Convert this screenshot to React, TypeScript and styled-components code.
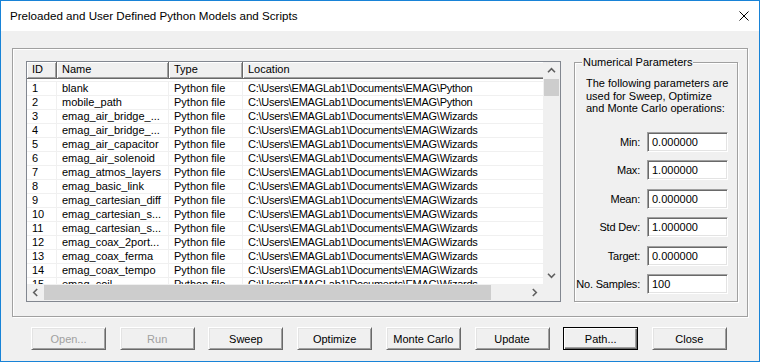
import * as React from 'react';
import styled, { createGlobalStyle } from 'styled-components';

const GlobalStyle = createGlobalStyle`
    html, body {
        margin: 0;
        padding: 0;
        background: #f0f0f0;
    }
    * {
        box-sizing: border-box;
    }
`;

const FONT = `"Liberation Sans", Arial, sans-serif`;

const models = [
    { name: 'blank', dir: 'Python' },
    { name: 'mobile_path', dir: 'Python' },
    { name: 'emag_air_bridge_...', dir: 'Wizards' },
    { name: 'emag_air_bridge_...', dir: 'Wizards' },
    { name: 'emag_air_capacitor', dir: 'Wizards' },
    { name: 'emag_air_solenoid', dir: 'Wizards' },
    { name: 'emag_atmos_layers', dir: 'Wizards' },
    { name: 'emag_basic_link', dir: 'Wizards' },
    { name: 'emag_cartesian_diff', dir: 'Wizards' },
    { name: 'emag_cartesian_s...', dir: 'Wizards' },
    { name: 'emag_cartesian_s...', dir: 'Wizards' },
    { name: 'emag_coax_2port...', dir: 'Wizards' },
    { name: 'emag_coax_ferma', dir: 'Wizards' },
    { name: 'emag_coax_tempo', dir: 'Wizards' },
    { name: 'emag_coil', dir: 'Wizards' },
];

const columns = [
    { title: 'ID', width: 30, spacing: 0 },
    { title: 'Name', width: 112, spacing: 0 },
    { title: 'Type', width: 74, spacing: 0 },
    { title: 'Location', width: 330, spacing: -0.25 },
];

const params = [
    { label: 'Min:', value: '0.000000' },
    { label: 'Max:', value: '1.000000' },
    { label: 'Mean:', value: '0.000000' },
    { label: 'Std Dev:', value: '1.000000' },
    { label: 'Target:', value: '0.000000' },
    { label: 'No. Samples:', value: '100' },
];

const buttons = [
    { text: 'Open...', disabled: true },
    { text: 'Run', disabled: true },
    { text: 'Sweep' },
    { text: 'Optimize' },
    { text: 'Monte Carlo' },
    { text: 'Update' },
    { text: 'Path...', isDefault: true },
    { text: 'Close' },
];

const Arrow = ({ dir }: { dir: 'up' | 'down' | 'left' | 'right' }) => {
    const rot = { up: 0, right: 90, down: 180, left: 270 }[dir];
    return (
        <svg width="9" height="9" viewBox="0 0 9 9">
            <path
                d="M1 6.2 L4.5 2.7 L8 6.2"
                fill="none"
                stroke="#606060"
                strokeWidth="1.6"
                transform={`rotate(${rot} 4.5 4.5)`}
            />
        </svg>
    );
};

class App extends React.Component {
    render() {
        return <>
            <GlobalStyle />
            <Window>
                <TitleBar>
                    <Title>Preloaded and User Defined Python Models and Scripts</Title>
                    <CloseGlyph>
                        <svg width="10" height="10" viewBox="0 0 10 10">
                            <path d="M0.5 0.5 L9.5 9.5 M9.5 0.5 L0.5 9.5" stroke="#000" strokeWidth="1" />
                        </svg>
                    </CloseGlyph>
                </TitleBar>
                <Body>
                    <Frame>
                        <ListView>
                            <Viewport>
                                <HeaderRow>
                                    {columns.map(c => (
                                        <HeaderCell key={c.title} $w={c.width}>{c.title}</HeaderCell>
                                    ))}
                                </HeaderRow>
                                <Rows>
                                    {models.map((m, i) => (
                                        <Row key={i}>
                                            <Cell $w={columns[0].width} $ls={columns[0].spacing}>{i + 1}</Cell>
                                            <Cell $w={columns[1].width} $ls={columns[1].spacing}>{m.name}</Cell>
                                            <Cell $w={columns[2].width} $ls={columns[2].spacing}>Python file</Cell>
                                            <Cell $w={columns[3].width} $ls={columns[3].spacing}>{`C:\\Users\\EMAGLab1\\Documents\\EMAG\\${m.dir}`}</Cell>
                                        </Row>
                                    ))}
                                </Rows>
                            </Viewport>
                            <ScrollBar $vertical>
                                <ScrollBtn><Arrow dir="up" /></ScrollBtn>
                                <Track $vertical>
                                    <Thumb $size={17} $vertical />
                                </Track>
                                <ScrollBtn><Arrow dir="down" /></ScrollBtn>
                            </ScrollBar>
                            <ScrollBar>
                                <ScrollBtn><Arrow dir="left" /></ScrollBtn>
                                <Track>
                                    <Thumb $size={447} />
                                </Track>
                                <ScrollBtn><Arrow dir="right" /></ScrollBtn>
                            </ScrollBar>
                            <Corner />
                        </ListView>
                        <GroupBox>
                            <Legend>Numerical Parameters</Legend>
                            <Description>
                                The following parameters are<br />
                                used for Sweep, Optimize<br />
                                and Monte Carlo operations:
                            </Description>
                            <ParamGrid>
                                {params.map(p => (
                                    <React.Fragment key={p.label}>
                                        <ParamLabel>{p.label}</ParamLabel>
                                        <Edit>{p.value}</Edit>
                                    </React.Fragment>
                                ))}
                            </ParamGrid>
                        </GroupBox>
                    </Frame>
                    <ButtonRow>
                        {buttons.map(b => (
                            <Button key={b.text} $disabled={b.disabled} $default={b.isDefault}>{b.text}</Button>
                        ))}
                    </ButtonRow>
                </Body>
            </Window>
        </>
    }
}

const Window = styled.div`
    width: 760px;
    height: 362px;
    border: 1px solid #1883d7;
    background: #f0f0f0;
    display: flex;
    flex-direction: column;
    font-family: ${FONT};
    font-size: 11px;
    color: #000;
    overflow: hidden;
`;

const TitleBar = styled.div`
    height: 30px;
    flex: none;
    background: #fff;
    display: flex;
    align-items: center;
    justify-content: space-between;
    padding: 0 10px 0 9px;
`;

const Title = styled.div`
    font-size: 11.6px;
    color: #000;
    padding-bottom: 1px;
`;

const CloseGlyph = styled.div`
    width: 10px;
    height: 10px;
    display: flex;
    margin-top: -1px;
`;

const Body = styled.div`
    flex: 1;
    display: flex;
    flex-direction: column;
    padding: 17px 0 0 11px;
`;

const Frame = styled.div`
    width: 736px;
    height: 269px;
    border: 1px solid #a0a0a0;
    box-shadow: inset 1px 1px 0 #fff, 1px 1px 0 #fff;
    display: flex;
    align-items: flex-start;
    gap: 13px;
    padding: 12px 9px 0 13px;
`;

const ListView = styled.div`
    width: 535px;
    height: 241px;
    flex: none;
    border: 1px solid #828790;
    background: #fff;
    display: grid;
    grid-template-columns: 516px 17px;
    grid-template-rows: 222px 17px;
`;

const Viewport = styled.div`
    overflow: hidden;
    background: #fff;
`;

const HeaderRow = styled.div`
    display: flex;
    height: 17px;
    width: max-content;
`;

const HeaderCell = styled.div<{ $w: number }>`
    width: ${p => p.$w}px;
    flex: none;
    height: 17px;
    line-height: 15px;
    padding-left: 5px;
    background: #f0f0f0;
    border-right: 1px solid #696969;
    border-bottom: 1px solid #696969;
    box-shadow: inset 1px 1px 0 #fff, inset -1px -1px 0 #a0a0a0;
    white-space: nowrap;
`;

const Rows = styled.div`
    padding-top: 2px;
`;

const Row = styled.div`
    display: flex;
    height: 14px;
    width: max-content;
    border-top: 1px solid #f0f0f0;
`;

const Cell = styled.div<{ $w: number; $ls: number }>`
    width: ${p => p.$w}px;
    flex: none;
    line-height: 13px;
    padding-left: 5px;
    letter-spacing: ${p => p.$ls}px;
    border-right: 1px solid #f0f0f0;
    white-space: nowrap;
    overflow: hidden;
`;

const ScrollBar = styled.div<{ $vertical?: boolean }>`
    display: flex;
    flex-direction: ${p => p.$vertical ? 'column' : 'row'};
    background: #f0f0f0;
`;

const ScrollBtn = styled.div`
    width: 17px;
    height: 17px;
    flex: none;
    display: flex;
    align-items: center;
    justify-content: center;
`;

const Track = styled.div<{ $vertical?: boolean }>`
    flex: 1;
    display: flex;
    flex-direction: ${p => p.$vertical ? 'column' : 'row'};
`;

const Thumb = styled.div<{ $size: number; $vertical?: boolean }>`
    flex: none;
    background: #cdcdcd;
    ${p => p.$vertical
        ? `height: ${p.$size}px; width: 15px; margin-left: 1px;`
        : `width: ${p.$size}px; height: 15px; margin-top: 1px;`}
`;

const Corner = styled.div`
    background: #f0f0f0;
`;

const GroupBox = styled.div`
    width: 164px;
    height: 240px;
    flex: none;
    margin-top: 1px;
    border: 1px solid #a0a0a0;
    box-shadow: inset 1px 1px 0 #fff, 1px 1px 0 #fff;
    display: flex;
    flex-direction: column;
    padding: 0 9px 0 11px;
`;

const Legend = styled.div`
    align-self: flex-start;
    margin: -7px 0 0 -4px;
    padding: 0 1px;
    line-height: 13px;
    background: #f0f0f0;
    white-space: nowrap;
`;

const Description = styled.div`
    margin-top: 8px;
    line-height: 12.5px;
    white-space: nowrap;
`;

const ParamGrid = styled.div`
    margin-top: 17px;
    display: grid;
    grid-template-columns: minmax(0, 1fr) 81px;
    grid-auto-rows: 20px;
    column-gap: 7px;
    row-gap: 8.6px;
    align-items: center;
`;

const ParamLabel = styled.div`
    display: flex;
    justify-content: flex-end;
    white-space: nowrap;
    letter-spacing: -0.2px;
`;

const Edit = styled.div`
    height: 20px;
    background: #fff;
    border: 1px solid;
    border-color: #a0a0a0 #fff #fff #a0a0a0;
    box-shadow: inset 1px 1px 0 #696969, inset -1px -1px 0 #e3e3e3;
    padding-left: 4px;
    line-height: 18px;
`;

const ButtonRow = styled.div`
    margin-top: 10px;
    width: 715px;
    padding-left: 19px;
    display: flex;
    justify-content: space-between;
`;

const Button = styled.div<{ $disabled?: boolean; $default?: boolean }>`
    width: 75px;
    height: 23px;
    display: flex;
    align-items: center;
    justify-content: center;
    background: #f0f0f0;
    color: ${p => p.$disabled ? '#a0a0a0' : '#000'};
    ${p => p.$default
        ? `border: 1px solid #000;
           box-shadow: inset 1px 1px 0 #fff, inset -1px -1px 0 #696969, inset -2px -2px 0 #a0a0a0;`
        : `border: 1px solid;
           border-color: #fff #696969 #696969 #fff;
           box-shadow: inset 1px 1px 0 #e3e3e3, inset -1px -1px 0 #a0a0a0;`}
`;

export default App;
